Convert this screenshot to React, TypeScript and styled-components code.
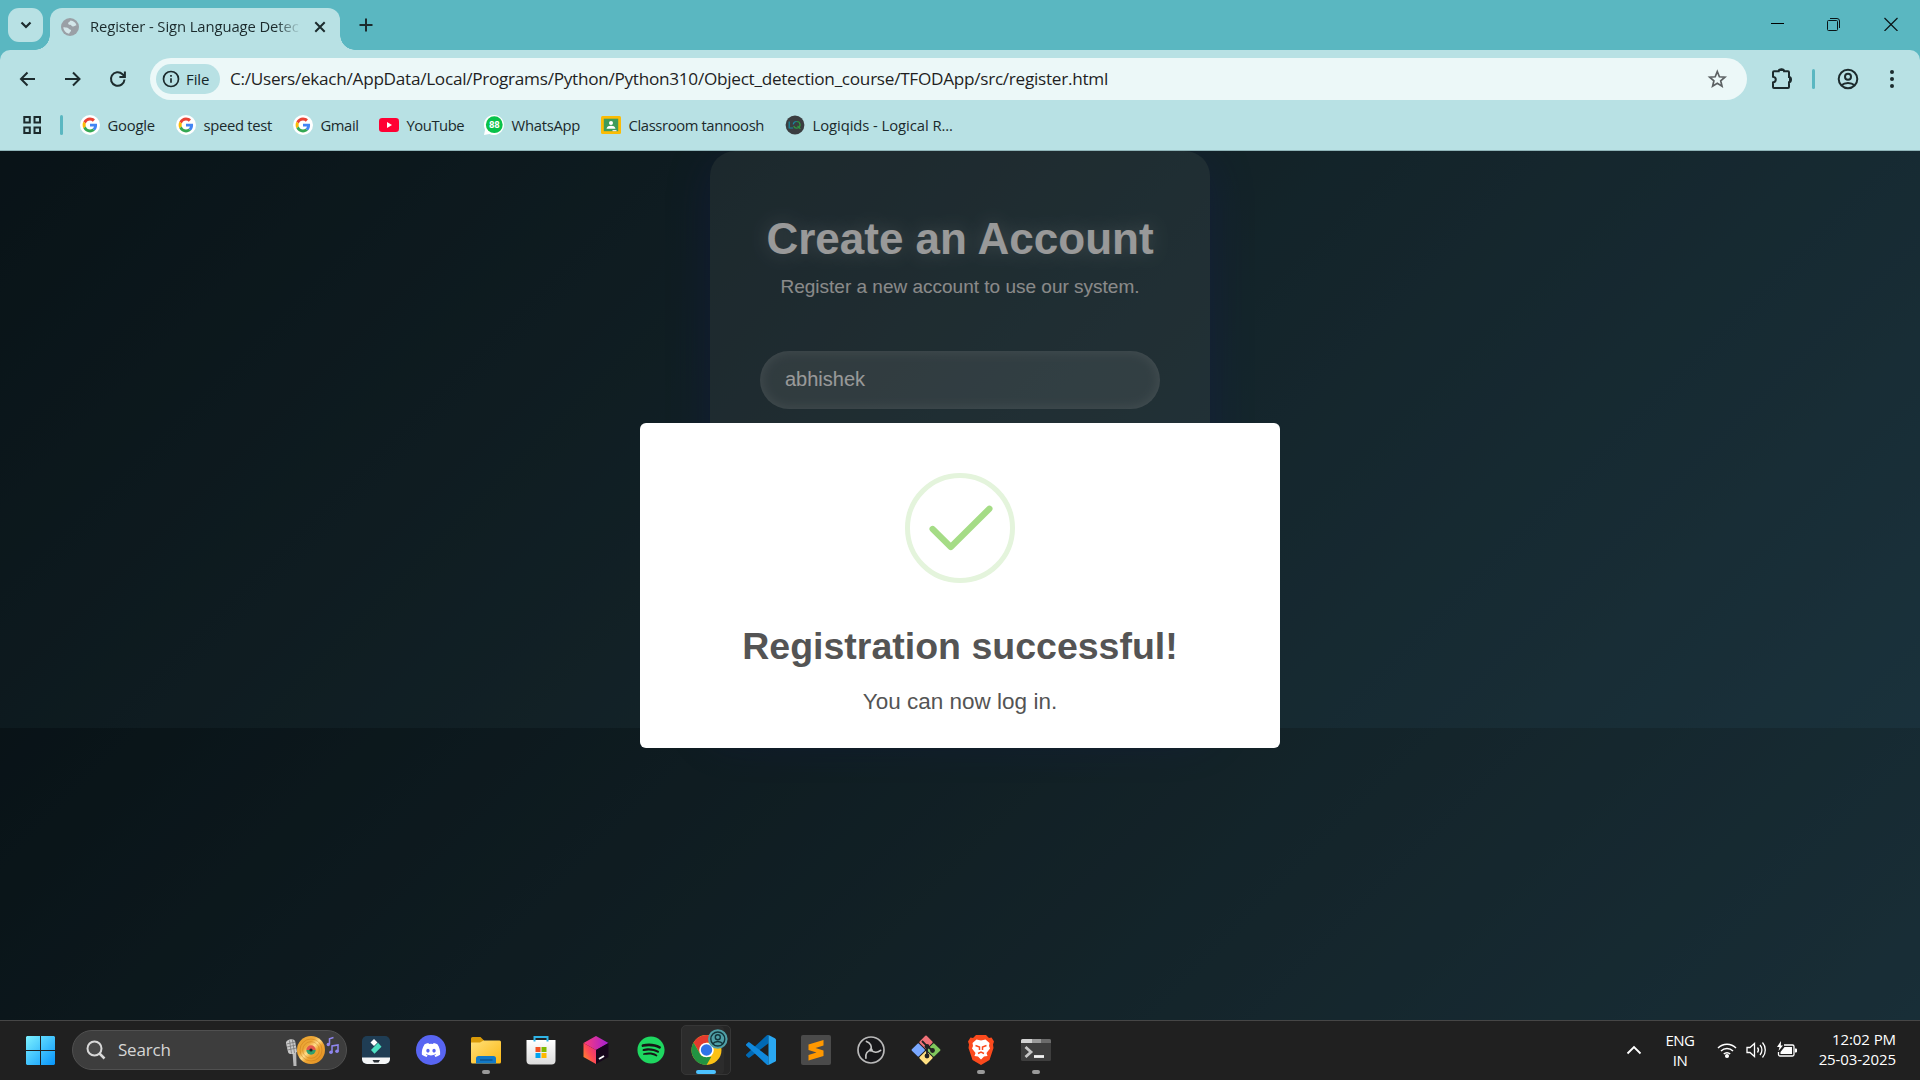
import React from "react";
import styled, { createGlobalStyle, css } from "styled-components";
import { FaDiscord, FaSpotify } from "react-icons/fa";

const ui = `"Open Sans", "Noto Sans", sans-serif`;
const page = `"Liberation Sans", Arial, sans-serif`;

const GlobalStyle = createGlobalStyle`
  * { box-sizing: border-box; }
  body { margin: 0; overflow: hidden; background: #202020; }
  svg { display: block; flex: none; }
`;

const Screen = styled.div`
  width: 1920px;
  height: 1080px;
  display: flex;
  flex-direction: column;
  overflow: hidden;
  font-family: ${ui};
`;

/* ---------- tab strip ---------- */
const TabStrip = styled.div`
  height: 50px;
  flex: none;
  background: #5ab7c1;
  display: flex;
  padding-left: 8px;
`;
const TabSearch = styled.div`
  width: 35px;
  height: 34px;
  margin-top: 8px;
  border-radius: 11px;
  background: #b8e1e4;
  display: grid;
  place-items: center;
`;
const Tab = styled.div`
  position: relative;
  width: 290px;
  height: 42px;
  margin: 8px 0 0 7px;
  padding: 0 14px 4px 10px;
  border-radius: 12px 12px 0 0;
  background: #b8e1e4;
  display: flex;
  align-items: center;
  &::before, &::after {
    content: "";
    position: absolute;
    bottom: 0;
    width: 15px;
    height: 15px;
  }
  &::before { left: -15px; background: radial-gradient(circle at 0 0, transparent 14.5px, #b8e1e4 15px); }
  &::after { right: -15px; background: radial-gradient(circle at 100% 0, transparent 14.5px, #b8e1e4 15px); }
`;
const TabTitle = styled.div`
  width: 213px;
  margin: -3px 12px 0 10px;
  white-space: nowrap;
  font-size: 14.8px;
  letter-spacing: -0.09px;
  color: #1b2a2c;
  mask-image: linear-gradient(90deg, #000 186px, transparent 211px);
`;
const NewTab = styled.div`
  margin: 17px 0 0 19px;
`;
const WindowButtons = styled.div`
  margin-left: auto;
  display: flex;
  align-items: flex-start;
  gap: 43px;
  padding: 17px 22px 0 0;
`;

/* ---------- toolbar ---------- */
const ToolbarArea = styled.div`
  height: 101px;
  flex: none;
  background: #5ab7c1;
`;
const ToolbarPanel = styled.div`
  height: 101px;
  border-radius: 10px 10px 0 0;
  background: #b8e1e4;
  border-bottom: 1px solid #8fb4b8;
`;
const Toolbar = styled.div`
  display: flex;
  align-items: center;
  height: 58px;
  padding-left: 17px;
`;
const NavButtons = styled.div`
  display: flex;
  gap: 23px;
  width: 133px;
`;
const AddressBar = styled.div`
  width: 1597px;
  height: 42px;
  border-radius: 21px;
  background: #ecf8f8;
  display: flex;
  align-items: center;
  padding: 0 18px 0 6px;
`;
const FileChip = styled.div`
  width: 64px;
  height: 30px;
  border-radius: 15px;
  background: #b8e1e4;
  display: flex;
  align-items: center;
  gap: 6px;
  padding: 0 0 1px 6px;
  font-size: 15px;
  font-weight: 500;
  letter-spacing: -0.1px;
  color: #15272a;
`;
const Url = styled.div`
  flex: 1;
  margin: -1px 0 0 10px;
  font-size: 17.2px;
  letter-spacing: -0.285px;
  color: #1f1f1f;
  white-space: nowrap;
`;
const ToolbarActions = styled.div`
  display: flex;
  align-items: center;
  margin-left: 22px;
`;
const Divider = styled.div<{ $h: number; $left?: number; $right?: number }>`
  width: 3px;
  height: ${(p) => p.$h}px;
  margin: 0 ${(p) => p.$right ?? 0}px 0 ${(p) => p.$left ?? 0}px;
  border-radius: 2px;
  background: #5ab7c1;
`;
const MenuDots = styled.div`
  margin-left: 29px;
`;
const BookmarkBar = styled.div`
  height: 42px;
  display: flex;
  align-items: center;
  padding: 0 0 8px 22px;
`;
const Bookmarks = styled.div`
  display: flex;
  margin-left: 17px;
`;
const Bookmark = styled.div<{ $w: number; $ls: number }>`
  width: ${(p) => p.$w}px;
  display: flex;
  align-items: center;
  gap: 7.5px;
  font-size: 14.8px;
  line-height: 20px;
  letter-spacing: ${(p) => p.$ls}px;
  color: #1b2a2c;
  white-space: nowrap;
`;

/* ---------- page ---------- */
const Viewport = styled.div`
  position: relative;
  height: 869px;
  flex: none;
  overflow: hidden;
  background: linear-gradient(135deg, #0f2027, #203a43, #2c5364) 0 0 / 100% 577px repeat-y;
  font-family: ${page};
`;
const Card = styled.div`
  width: 500px;
  height: 577px;
  margin: 0 auto;
  padding: 63px 50px 0;
  border-radius: 25px;
  background: rgba(255, 255, 255, 0.1);
  box-shadow: 0 10px 40px rgba(31, 38, 135, 0.37);
  text-align: center;
`;
const CardTitle = styled.h1`
  margin: 0;
  font-size: 44px;
  line-height: 50px;
  font-weight: 700;
  color: #fff;
  text-shadow: 0 0 19px rgba(255, 255, 255, 0.3);
`;
const CardText = styled.p`
  margin: 12px 0 0;
  font-size: 19px;
  line-height: 22px;
  color: #e6e6e6;
`;
const Field = styled.input`
  display: block;
  width: 400px;
  height: 58px;
  margin-top: 53px;
  padding: 0 25px 2px;
  border: 0;
  border-radius: 29px;
  outline: none;
  background: rgba(255, 255, 255, 0.15);
  box-shadow: inset 0 0 13px rgba(255, 255, 255, 0.2);
  font: 20px ${page};
  color: #fff;
`;
const Overlay = styled.div`
  position: absolute;
  inset: 0;
  display: flex;
  align-items: center;
  justify-content: center;
  background: rgba(0, 0, 0, 0.4);
`;
const Modal = styled.div`
  width: 640px;
  height: 325px;
  border-radius: 6px;
  background: #fff;
  display: flex;
  flex-direction: column;
  align-items: center;
  padding-top: 50px;
  color: #545454;
`;
const ModalTitle = styled.h2`
  margin: 41px 0 0;
  font-size: 37.5px;
  line-height: 44px;
  font-weight: 600;
`;
const ModalText = styled.p`
  margin: 21px 0 0;
  font-size: 22.5px;
  line-height: 26px;
`;

/* ---------- taskbar ---------- */
const Taskbar = styled.div`
  height: 60px;
  flex: none;
  display: flex;
  align-items: center;
  padding: 0 0 1px 26px;
  border-top: 1px solid #464646;
  background: #202020;
  color: #fff;
`;
const SearchBox = styled.div`
  width: 275px;
  height: 40px;
  margin: 0 1px 0 17px;
  padding: 0 6px 0 13px;
  display: flex;
  align-items: center;
  border: 1px solid #505050;
  border-radius: 20px;
  background: #3d3d3d;
`;
const SearchText = styled.div`
  flex: 1;
  margin: -1px 0 0 12px;
  font-size: 17px;
  letter-spacing: -0.2px;
  color: #d6d6d6;
`;
const AppSlot = styled.div<{ $active?: boolean; $running?: boolean }>`
  position: relative;
  width: 55px;
  height: 58px;
  display: grid;
  place-items: center;
  ${(p) =>
    (p.$active || p.$running) &&
    css`
      &::after {
        content: "";
        position: absolute;
        bottom: 5px;
        left: ${p.$active ? 18 : 24}px;
        width: ${p.$active ? 20 : 8}px;
        height: 4px;
        border-radius: 2px;
        background: ${p.$active ? "#4cc2ff" : "#9a9a9a"};
      }
    `}
`;
const ActivePlate = styled.div`
  width: 50px;
  height: 50px;
  margin-left: 1px;
  border: 1px solid #363636;
  border-radius: 5px;
  background: #2c2c2c;
  display: grid;
  place-items: center;
  padding-left: 5px;
  box-shadow: inset -6px 0 0 #262626;
`;
const Tray = styled.div`
  margin-left: auto;
  display: flex;
  align-items: center;
  padding-right: 24px;
  font-size: 15px;
  line-height: 20px;
`;
const Language = styled.div`
  width: 40px;
  margin: 0 17px 0 18px;
  letter-spacing: -0.5px;
  text-align: center;
`;
const Status = styled.div`
  display: flex;
  align-items: center;
  gap: 9px;
`;
const Clock = styled.div`
  width: 99px;
  text-align: right;
  margin-top: -2px;
  letter-spacing: -0.09px;
`;

const ink = "#1c2b2d";

const GoogleIcon = () => (
  <svg width="20" height="20" viewBox="0 0 20 20">
    <circle cx="10" cy="10" r="10" fill="#fff" />
    <g transform="translate(2.6 2.6) scale(.308)">
      <path fill="#EA4335" d="M24 9.5c3.54 0 6.71 1.22 9.21 3.6l6.85-6.85C35.9 2.38 30.47 0 24 0 14.62 0 6.51 5.38 2.56 13.22l7.98 6.19C12.43 13.72 17.74 9.5 24 9.5z" />
      <path fill="#4285F4" d="M46.98 24.55c0-1.57-.15-3.09-.38-4.55H24v9.02h12.94c-.58 2.96-2.26 5.48-4.78 7.18l7.73 6c4.51-4.18 7.09-10.36 7.09-17.65z" />
      <path fill="#FBBC05" d="M10.53 28.59c-.48-1.45-.76-2.99-.76-4.59s.27-3.14.76-4.59l-7.98-6.19C.92 16.46 0 20.12 0 24c0 3.88.92 7.54 2.56 10.78l7.97-6.19z" />
      <path fill="#34A853" d="M24 48c6.48 0 11.93-2.13 15.89-5.81l-7.73-6c-2.15 1.45-4.92 2.3-8.16 2.3-6.26 0-11.57-4.22-13.47-9.91l-7.98 6.19C6.51 42.62 14.62 48 24 48z" />
    </g>
  </svg>
);
const YouTubeIcon = () => (
  <svg width="20" height="20" viewBox="0 0 20 20">
    <rect x="0" y="3" width="20" height="14" rx="3.2" fill="#ff0033" />
    <path d="M8 7v6l5-3z" fill="#fff" />
  </svg>
);
const WhatsAppIcon = () => (
  <svg width="20" height="20" viewBox="0 0 20 20">
    <path d="M10 0a10 10 0 1 1-4.6 18.9L0 20l1.1-5.2A10 10 0 0 1 10 0z" fill="#fff" />
    <circle cx="10.3" cy="9.7" r="8.4" fill="#0ac24a" />
    <text x="10.3" y="13.3" fontSize="9.5" fontWeight="700" textAnchor="middle" fill="#fff" fontFamily="Roboto, sans-serif">88</text>
  </svg>
);
const ClassroomIcon = () => (
  <svg width="20" height="20" viewBox="0 0 20 20">
    <rect y="1" width="20" height="18" rx="1.5" fill="#fbbc04" />
    <rect x="2.8" y="3.7" width="14.4" height="12.5" fill="#3f9c5a" />
    <circle cx="10" cy="8" r="2" fill="#fff" />
    <path d="M5.5 13.7c.5-2.4 2.400-3 4.500-3s4 .6 4.500 3z" fill="#fff" />
    <rect x="11.5" y="15" width="4" height="1.2" fill="#e8e8e8" />
  </svg>
);
const LogiqidsIcon = () => (
  <svg width="20" height="20" viewBox="0 0 20 20">
    <circle cx="10" cy="10" r="9.4" fill="#3a3d40" />
    <path d="M4.200 6.500v6.500h4" fill="none" stroke="#178ba0" strokeWidth="1.200" />
    <path d="M8.200 9.300a3.600 3.600 0 0 1 3.600-2.800" fill="none" stroke="#178ba0" strokeWidth="1.200" />
    <path d="M11.800 6.500a3.300 3.300 0 1 1-3.100 4.500M12.500 10.800l2.900 3" fill="none" stroke="#2d9a3f" strokeWidth="1.200" />
  </svg>
);

const bookmarks = [
  { label: "Google", w: 96, ls: -0.22, Icon: GoogleIcon },
  { label: "speed test", w: 117, ls: -0.3, Icon: GoogleIcon },
  { label: "Gmail", w: 86, ls: -0.42, Icon: GoogleIcon },
  { label: "YouTube", w: 105, ls: -0.45, Icon: YouTubeIcon },
  { label: "WhatsApp", w: 117, ls: -0.27, Icon: WhatsAppIcon },
  { label: "Classroom tannoosh", w: 184, ls: -0.38, Icon: ClassroomIcon },
  { label: "Logiqids - Logical R...", w: 180, ls: -0.06, Icon: LogiqidsIcon },
];

const WindowsLogo = () => (
  <svg width="29" height="29" viewBox="0 0 29 29">
    <defs>
      <linearGradient id="win" x1="0" y1="0" x2="29" y2="29" gradientUnits="userSpaceOnUse">
        <stop offset="0" stopColor="#7df1ff" />
        <stop offset=".5" stopColor="#42c3fd" />
        <stop offset="1" stopColor="#0795fb" />
      </linearGradient>
    </defs>
    <path fill="url(#win)" d="M1 0h13v14H0V1zM15 0h13l1 1v13H15zM0 15h14v14H1l-1-1zM15 15h14v13l-1 1H15z" />
  </svg>
);
const MusicArt = () => (
  <svg width="56" height="34" viewBox="0 0 56 34">
    <defs>
      <linearGradient id="disc" x1="0" y1="0" x2="1" y2="1">
        <stop offset="0" stopColor="#e9a02c" />
        <stop offset=".35" stopColor="#eda838" />
        <stop offset=".48" stopColor="#ffdc8a" />
        <stop offset=".6" stopColor="#eea533" />
        <stop offset="1" stopColor="#dd8a1e" />
      </linearGradient>
    </defs>
    <path d="M8.500 19l3.700-.5.300 14.500h-3z" fill="#b9b9b9" />
    <path d="M2 10.500c-.8-4 8.300-6 9.200-1.800l1.700 9.500c-1 3-7.500 4-8.700 1.200z" fill="#c9c9c9" />
    <path d="M2.400 11l9-2M3 14l8.800-2M3.500 17l8.800-2M5.500 7.500l2 13M8.500 7l2 13" stroke="#777" strokeWidth=".8" />
    <circle cx="27" cy="17" r="14" fill="url(#disc)" />
    <g fill="none" stroke="#b9690d" strokeWidth=".6" opacity=".6">
      <circle cx="27" cy="17" r="11" />
      <circle cx="27" cy="17" r="8.300" />
    </g>
    <path d="M22.300 17a4.700 4.700 0 0 1 9.400 0z" fill="#e2574c" />
    <path d="M22.300 17a4.700 4.700 0 0 0 9.400 0z" fill="#2f9e6e" />
    <circle cx="27" cy="17" r="1.600" fill="#222" />
    <g fill="none" stroke="#8f86ee" strokeWidth="1.500">
      <path d="M45.500 11.500V5.800l4-1.300" />
      <path d="M48 19v-6l6-1v6" />
    </g>
    <circle cx="44.300" cy="11.500" r="1.700" fill="#8f86ee" />
    <circle cx="47" cy="19.300" r="1.800" fill="#8f86ee" />
    <circle cx="53" cy="18.300" r="1.800" fill="#8f86ee" />
  </svg>
);
const Filmora = () => (
  <svg width="28" height="28" viewBox="0 0 28 28">
    <rect width="28" height="28" rx="5" fill="#1f3d54" />
    <path d="M0 21.500h28V23a5 5 0 0 1-5 5H5a5 5 0 0 1-5-5z" fill="#f4f6f7" />
    <path d="M10.500 24h7.500l-1.500 2.500h-4.500z" fill="#2a3036" />
    <path d="M12 3l3.500 3.500L12 10 8.500 6.500z" fill="#fff" />
    <path d="M16 6.800l3.500 4-7 7-3.500-3.800z" fill="#4de0c2" />
  </svg>
);
const Discord = () => (
  <svg width="30" height="30" viewBox="0 0 30 30">
    <circle cx="15" cy="15" r="15" fill="#5865f2" />
    <FaDiscord x="5" y="5" size="20" color="#fff" />
  </svg>
);
const Explorer = () => (
  <svg width="30" height="28" viewBox="0 0 30 28">
    <defs>
      <linearGradient id="fold" x1="0" y1="0" x2="1" y2="1">
        <stop offset="0" stopColor="#ffe07a" />
        <stop offset="1" stopColor="#fdb813" />
      </linearGradient>
    </defs>
    <path d="M0 2.500A1.500 1.500 0 0 1 1.500 1H9.500l3.500 3.500V8H0z" fill="#d99a09" />
    <path d="M0 6.500h9l3.500-2H28.500A1.500 1.500 0 0 1 30 6v20a1.500 1.500 0 0 1-1.500 1.500h-27A1.500 1.500 0 0 1 0 26z" fill="url(#fold)" />
    <path d="M5 27.500V22.500a2.500 2.500 0 0 1 2.500-2.500h15a2.500 2.500 0 0 1 2.500 2.500v5z" fill="#1279c6" />
    <path d="M9 24h12.500" stroke="#0a4c86" strokeWidth="1.200" />
  </svg>
);
const Store = () => (
  <svg width="30" height="30" viewBox="0 0 30 30">
    <defs>
      <linearGradient id="bag" x1="0" y1="0" x2="0" y2="1">
        <stop offset="0" stopColor="#fff" />
        <stop offset="1" stopColor="#dcdcdc" />
      </linearGradient>
    </defs>
    <path d="M.5 5h29v20.500a4 4 0 0 1-4 4h-21a4 4 0 0 1-4-4z" fill="url(#bag)" />
    <path d="M8.500 6.500V2h13v4.500" fill="none" stroke="#2fb4e6" strokeWidth="2" />
    <path d="M9.500 12h5v5h-5z" fill="#f25022" />
    <path d="M15.500 12h5v5h-5z" fill="#7fba00" />
    <path d="M9.500 18h5v5h-5z" fill="#00a4ef" />
    <path d="M15.500 18h5v5h-5z" fill="#ffb900" />
  </svg>
);
const Cube = () => (
  <svg width="26" height="28" viewBox="0 0 26 28">
    <defs>
      <linearGradient id="cl" x1="0" y1="1" x2="1" y2="0">
        <stop offset="0" stopColor="#ff9a1f" />
        <stop offset=".5" stopColor="#ff4a55" />
        <stop offset="1" stopColor="#e02a8a" />
      </linearGradient>
      <linearGradient id="ct" x1="0" y1="0" x2="1" y2="0">
        <stop offset="0" stopColor="#ff3d77" />
        <stop offset="1" stopColor="#a21fd6" />
      </linearGradient>
    </defs>
    <path d="M13 0l12.500 7L13 14 .5 7z" fill="url(#ct)" />
    <path d="M.5 7L13 14v14L.5 21z" fill="url(#cl)" />
    <path d="M25.500 7L13 14v14l12.500-7z" fill="#16061c" />
    <path d="M16 23l5-3" stroke="#fff" strokeWidth="2" />
  </svg>
);
const Spotify = () => (
  <svg width="28" height="28" viewBox="0 0 28 28">
    <circle cx="14" cy="14" r="12" fill="#171717" />
    <FaSpotify size="28" color="#1ed760" />
  </svg>
);
const Chrome = () => (
  <svg width="42" height="42" viewBox="0 0 42 42">
    <g transform="translate(3.500 6)">
      <circle cx="15" cy="15" r="15" fill="#fbc116" />
      <path d="M15 15L2 7.500A15 15 0 0 1 28 7.500H15z" fill="#e33b2e" />
      <path d="M2 7.500L8.600 18.800 15 15V7.500z" fill="#e33b2e" />
      <path d="M2 7.500L8.500 18.700A7 7 0 0 0 15 22h4.700L15 30A15 15 0 0 1 2 7.500z" fill="#229342" />
      <circle cx="15" cy="15" r="7.300" fill="#fff" />
      <circle cx="15" cy="15" r="5.700" fill="#2f74e8" />
    </g>
    <circle cx="29.800" cy="10" r="9.800" fill="#4f9fa6" />
    <g fill="none" stroke="#12343a" strokeWidth="1.400">
      <circle cx="29.800" cy="10" r="7" />
      <circle cx="29.800" cy="8.200" r="2.500" />
      <path d="M24.800 14.800c2.500-3 7.500-3 10 0" />
    </g>
  </svg>
);
const VsCode = () => (
  <svg width="30" height="30" viewBox="0 0 100 100">
    <path d="M1.400 63.900a4.200 4.200 0 0 0 0 6.200l5.500 5a4.200 4.200 0 0 0 5.300.2L75 27.300V0a6 6 0 0 0-6.200 1.800z" fill="#0069b4" />
    <path d="M1.400 36.100a4.200 4.200 0 0 1 0-6.200l5.500-5a4.200 4.200 0 0 1 5.300-.2L75 72.700V100a6 6 0 0 1-6.200-1.800z" fill="#1089dd" />
    <path d="M75 0l21.500 10.500A6.300 6.300 0 0 1 100 16v68a6.300 6.300 0 0 1-3.500 5.500L75 100z" fill="#2aa8f2" />
  </svg>
);
const Sublime = () => (
  <svg width="30" height="30" viewBox="0 0 30 30">
    <rect width="30" height="30" rx="2" fill="#4a4a4a" />
    <path d="M7.500 9.500L22.500 5v5.500L14.500 13l8 2.500v5.500L7.500 25.500V20l8-2.500-8-2.500z" fill="#ff9800" />
  </svg>
);
const Obs = () => (
  <svg width="28" height="28" viewBox="0 0 28 28">
    <circle cx="14" cy="14" r="13" fill="#17171a" stroke="#b9b9b9" strokeWidth="1.700" />
    <g fill="none" stroke="#c4c4c4" strokeWidth="1.700" strokeLinecap="round">
      <path d="M14 14C15 10.500 13.500 7 9.500 5.500" />
      <path d="M14 14C15 10.500 13.500 7 9.500 5.500" transform="rotate(120 14 14)" />
      <path d="M14 14C15 10.500 13.500 7 9.500 5.500" transform="rotate(240 14 14)" />
    </g>
    <circle cx="14" cy="14" r="1.800" fill="#c4c4c4" />
  </svg>
);
const Git = () => (
  <svg width="30" height="30" viewBox="0 0 30 30">
    <g transform="rotate(45 15 15)">
      <rect x="4.500" y="4.500" width="10" height="10" rx="1" fill="#f07178" />
      <rect x="15.500" y="4.500" width="10" height="10" rx="1" fill="#80c75c" />
      <rect x="4.500" y="15.500" width="10" height="10" rx="1" fill="#7aa8ff" />
      <rect x="15.500" y="15.500" width="10" height="10" rx="1" fill="#ffe082" />
    </g>
    <path d="M11 6l5 5v10.500M16 11l6 5" stroke="#222" strokeWidth="1.800" fill="none" />
    <circle cx="16" cy="11.500" r="2.400" fill="#222" />
    <circle cx="16" cy="21" r="2.400" fill="#222" />
    <circle cx="21.500" cy="15.500" r="2.400" fill="#222" />
  </svg>
);
const Brave = () => (
  <svg width="26" height="30" viewBox="0 0 26 30">
    <path d="M8 0h10l3 3 2.500-.5L26 6.500l-1 3 .5 3.500-4 12L13 30l-8.500-5-4-12L1 9.500l-1-3 2.500-4L5 3z" fill="#fb4a1d" />
    <path d="M13 5.500l4.500-1 4 3.500-.5 3 1 2.500-3.500 4.500 1 3-3.500.5L13 24.500 10 21.500 6.500 21l1-3L4 13.500 5 11l-.5-3 4-3.500z" fill="#fff" />
    <path d="M7.500 10.500l4 1.500v3M18.500 10.500l-4 1.500v3M10 18.500l3-1.500 3 1.500" fill="none" stroke="#fb4a1d" strokeWidth="1.500" />
  </svg>
);
const Terminal = () => (
  <svg width="30" height="24" viewBox="0 0 30 24">
    <rect y="1" width="30" height="22" rx="1.500" fill="#3e3e3e" />
    <path d="M0 5V2.500A1.500 1.500 0 0 1 1.500 1H11v4z" fill="#d2d2d2" />
    <path d="M11 1h9v4h-9z" fill="#9a9a9a" />
    <path d="M20 1h8.500A1.500 1.500 0 0 1 30 2.500V5H20z" fill="#6b6b6b" />
    <path d="M4.500 9l5.500 5-5.500 5" fill="none" stroke="#c6c6c6" strokeWidth="2.800" />
    <path d="M13 18.500h10" stroke="#f2f2f2" strokeWidth="2.800" />
  </svg>
);

const apps = [
  { Icon: Filmora }, { Icon: Discord }, { Icon: Explorer, running: true }, { Icon: Store },
  { Icon: Cube }, { Icon: Spotify }, { Icon: Chrome, active: true }, { Icon: VsCode },
  { Icon: Sublime }, { Icon: Obs }, { Icon: Git }, { Icon: Brave, running: true },
  { Icon: Terminal, running: true },
];

export default function App() {
  return (
    <Screen>
      <GlobalStyle />
      <TabStrip>
        <TabSearch>
          <svg width="12" height="8" viewBox="0 0 12 8"><path d="M1.500 1.500L6 6l4.500-4.500" fill="none" stroke={ink} strokeWidth="2.200" /></svg>
        </TabSearch>
        <Tab>
          <svg width="20" height="20" viewBox="0 0 20 20">
            <circle cx="10" cy="10" r="9" fill="#9aa0a6" />
            <path d="M10.500 3.500c3 .3 5.200 2 6 4.700-1.500.3-2.300 1.300-3.500 1.200-1.600-.1-1.300-1.500-3-1.700-1.200-.1-2.200-.7-1.800-1.800.3-1 1.700-.9 2.300-2.400zM3.300 10.300c1.700.1 2.700.1 4.200.4 1.400.4 1.300 1.500 2.700 1.800 1.300.3 1 1.700.2 2.200-.9.600-.6 1.500-1.400 2-3-.500-5.500-3.200-5.700-6.400z" fill="#d3e6e9" />
          </svg>
          <TabTitle>Register - Sign Language Detec</TabTitle>
          <svg width="12" height="12" viewBox="0 0 12 12"><path d="M1.300 1.300l9.400 9.400M10.700 1.300l-9.400 9.400" stroke={ink} strokeWidth="2" /></svg>
        </Tab>
        <NewTab>
          <svg width="14" height="16" viewBox="0 0 14 16"><path d="M7 1.500v13M.5 8h13" stroke={ink} strokeWidth="2" /></svg>
        </NewTab>
        <WindowButtons>
          <svg width="13" height="14" viewBox="0 0 13 14"><path d="M0 6.500h13" stroke="#000" /></svg>
          <svg width="14" height="14" viewBox="0 0 14 14"><path d="M3 1.500h7a2.500 2.500 0 0 1 2.500 2.500v7M1.500 3.500h8a1 1 0 0 1 1 1v8a1 1 0 0 1-1 1h-8a1 1 0 0 1-1-1v-8a1 1 0 0 1 1-1z" fill="none" stroke="#0a1517" /></svg>
          <svg width="14" height="14" viewBox="0 0 14 14"><path d="M.5 1l13 13M13.500 1l-13 13" stroke="#0a1517" strokeWidth="1.200" /></svg>
        </WindowButtons>
      </TabStrip>
      <ToolbarArea>
        <ToolbarPanel>
          <Toolbar>
            <NavButtons>
              <svg width="22" height="22" viewBox="0 0 22 22"><path d="M18 11H4.500M10.500 4.500L4 11l6.500 6.500" fill="none" stroke={ink} strokeWidth="2" /></svg>
              <svg width="22" height="22" viewBox="0 0 22 22"><path d="M3 11h14.500M11 4.500l6.500 6.500-6.500 6.500" fill="none" stroke={ink} strokeWidth="2" /></svg>
              <svg width="22" height="22" viewBox="0 0 22 22"><path d="M17.500 11.500a6.800 6.800 0 1 1-2-5.300L17.500 8.500M17.900 3.500v5.500h-5.500" fill="none" stroke={ink} strokeWidth="2" /></svg>
            </NavButtons>
            <AddressBar>
              <FileChip>
                <svg width="18" height="18" viewBox="0 0 18 18"><circle cx="9" cy="9" r="7.500" fill="none" stroke={ink} strokeWidth="1.700" /><path d="M9 8.200v4.600M9 5v1.800" stroke={ink} strokeWidth="1.700" /></svg>
                File
              </FileChip>
              <Url>C:/Users/ekach/AppData/Local/Programs/Python/Python310/Object_detection_course/TFODApp/src/register.html</Url>
              <svg width="24" height="24" viewBox="0 0 24 24"><path d="M12.300 4.500l2.100 5.300 5.500.4-4.200 3.600 1.300 5.400-4.700-2.900-4.700 2.900 1.300-5.400-4.200-3.600 5.500-.4z" fill="none" stroke="#5c6163" strokeWidth="1.700" /></svg>
            </AddressBar>
            <ToolbarActions>
              <svg width="26" height="26" viewBox="0 0 26 26"><path d="M5 5.200h4.700a2.700 2 0 0 1 5.400 0H19a1 1 0 0 1 1 1V11a2 2.600 0 0 1 0 5.200V21a1 1 0 0 1-1 1H5a1 1 0 0 1-1-1v-4.600c3.700-.5 3.700-5.200 0-5.700V6.200a1 1 0 0 1 1-1z" fill="none" stroke={ink} strokeWidth="2" /><path d="M9.700 5a2.700 2.200 0 0 1 5.400 0zM20 11a2.200 2.600 0 0 1 0 5.200z" fill={ink} /></svg>
              <Divider $h={20} $left={17} $right={21} />
              <svg width="24" height="24" viewBox="0 0 24 24" fill="none" stroke={ink} strokeWidth="2"><circle cx="12" cy="12" r="9.300" /><circle cx="12" cy="9.800" r="3" /><path d="M5.500 18.300c3.300-3 9.700-3 13 0" /></svg>
              <MenuDots>
                <svg width="6" height="20" viewBox="0 0 6 20" fill={ink}><circle cx="3" cy="3" r="2" /><circle cx="3" cy="10" r="2" /><circle cx="3" cy="17" r="2" /></svg>
              </MenuDots>
            </ToolbarActions>
          </Toolbar>
          <BookmarkBar>
            <svg width="20" height="20" viewBox="0 0 20 20"><path d="M2.300 2h5.500v5.500H2.300zM12.500 2H18v5.500h-5.500zM2.300 12.500h5.500V18H2.300zM12.500 12.500H18V18h-5.500z" fill="none" stroke={ink} strokeWidth="2" /></svg>
            <Divider $h={20} $left={18} />
            <Bookmarks>
              {bookmarks.map(({ label, w, ls, Icon }) => (
                <Bookmark key={label} $w={w} $ls={ls}><Icon />{label}</Bookmark>
              ))}
            </Bookmarks>
          </BookmarkBar>
        </ToolbarPanel>
      </ToolbarArea>
      <Viewport>
        <Card>
          <CardTitle>Create an Account</CardTitle>
          <CardText>Register a new account to use our system.</CardText>
          <Field defaultValue="abhishek" />
        </Card>
        <Overlay>
          <Modal>
            <svg width="110" height="110" viewBox="0 0 110 110">
              <circle cx="55" cy="55" r="52.500" fill="none" stroke="#e4f4dc" strokeWidth="5" />
              <path d="M27.600 56l18.200 18 38.600-38.300" fill="none" stroke="#a5dc86" strokeWidth="6.200" strokeLinecap="round" strokeLinejoin="round" />
            </svg>
            <ModalTitle>Registration successful!</ModalTitle>
            <ModalText>You can now log in.</ModalText>
          </Modal>
        </Overlay>
      </Viewport>
      <Taskbar>
        <WindowsLogo />
        <SearchBox>
          <svg width="20" height="20" viewBox="0 0 20 20"><circle cx="8.500" cy="8.500" r="7" fill="#4a4a4a" stroke="#d8d8d8" strokeWidth="2" /><path d="M13.500 13.500l5 5" stroke="#d8d8d8" strokeWidth="2.500" /></svg>
          <SearchText>Search</SearchText>
          <MusicArt />
        </SearchBox>
        {apps.map(({ Icon, active, running }, i) => (
          <AppSlot key={i} $active={active} $running={running}>
            {active ? <ActivePlate><Icon /></ActivePlate> : <Icon />}
          </AppSlot>
        ))}
        <Tray>
          <svg width="16" height="10" viewBox="0 0 16 10"><path d="M1.500 8.500L8 2l6.500 6.500" fill="none" stroke="#fff" strokeWidth="1.800" /></svg>
          <Language>ENG<br />IN</Language>
          <Status>
            <svg width="20" height="18" viewBox="0 0 20 18" fill="none" stroke="#fff" strokeWidth="1.500"><path d="M1 7a12.700 12.700 0 0 1 18 0M4 10a8.500 8.500 0 0 1 12 0M6.800 13a4.500 4.500 0 0 1 6.400 0" /><circle cx="10" cy="15" r="1.300" fill="#fff" /></svg>
            <svg width="22" height="18" viewBox="0 0 22 18" fill="none" stroke="#fff" strokeWidth="1.300"><path d="M1 6.500h3L8.500 2.500v13L4 11.500H1zM11.500 6.500a4 4 0 0 1 0 5M14 4a7.500 7.500 0 0 1 0 10M16.500 1.500a11.500 11.500 0 0 1 0 15" /></svg>
            <svg width="20" height="18" viewBox="0 0 20 18"><path d="M7 4h8.500A1.500 1.500 0 0 1 17 5.500v8a1.500 1.500 0 0 1-1.500 1.500H3a1.500 1.500 0 0 1-1.500-1.500V11" fill="none" stroke="#fff" strokeWidth="1.300" /><path d="M7.500 6H15v7H3.500v-2zM18 7.500h1a1 1 0 0 1 1 1v2a1 1 0 0 1-1 1h-1zM4 0L0 6h2.500L1.500 10 6 4.500H3.800z" fill="#fff" /></svg>
          </Status>
          <Clock>12:02 PM<br />25-03-2025</Clock>
        </Tray>
      </Taskbar>
    </Screen>
  );
}
